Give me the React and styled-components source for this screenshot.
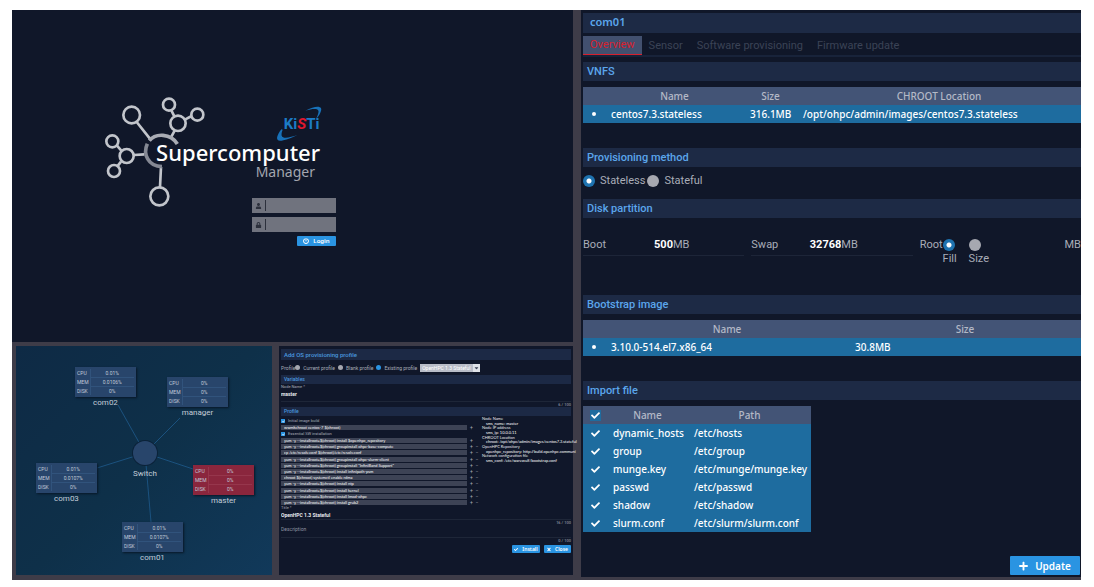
import React from "react";
import styled, { createGlobalStyle, css } from "styled-components";
import { FaCheck, FaPlus, FaTimes, FaUser, FaLock, FaPowerOff, FaCaretDown } from "react-icons/fa";

const UI = `Roboto, "Liberation Sans", sans-serif`;
const HUMAN = `"Noto Sans", "Open Sans", sans-serif`;
const SMALL = `Lato, "Liberation Sans", sans-serif`;

const Global = createGlobalStyle`
  *, *::before, *::after { box-sizing: border-box; }
  body { margin: 0; background: #fff; font-family: ${UI}; color: #a9adb8; }
  input, button, select { font: inherit; color: inherit; margin: 0; padding: 0; border: 0; border-radius: 0; min-width: 0; }
  table { border-collapse: collapse; }
  th, td { padding: 0; }
  h1, h2, h3, p { margin: 0; }
`;

const Board = styled.main`
  display: grid;
  grid-template-columns: minmax(0, 561fr) minmax(0, 500fr);
  gap: 8px;
  min-height: calc(100vh - 17px);
  margin: 10px 13px 7px 12px;
  background: #3e3c48;
`;

const Column = styled.div`
  display: flex;
  flex-direction: column;
`;

/* ---------- login ---------- */

const LoginPanel = styled.section`
  flex: 1;
  padding: 86px 0 0 92px;
  background: #101729;
`;

const Brand = styled.div`
  position: relative;
  width: 220px;
  height: 111px;
  svg { display: block; }
`;

const Wordmark = styled.h1`
  position: absolute;
  right: 4px;
  top: 44px;
  display: flex;
  flex-direction: column;
  align-items: flex-end;
  font: 500 22px/24px ${HUMAN};
  color: #fff;
`;

const Submark = styled.span`
  padding-right: 5px;
  font: 400 14px/16px ${HUMAN};
  color: #a3a6af;
`;

const LoginForm = styled.form`
  display: flex;
  flex-direction: column;
  align-items: flex-end;
  gap: 4px;
  width: 232px;
  margin-top: -9px;
`;

const Field = styled.label`
  display: flex;
  align-items: center;
  width: 84px;
  height: 15px;
  background: #70737e;
  color: #2c303c;
  svg { width: 13px; height: 6px; }
  input {
    flex: 1;
    height: 11px;
    padding-left: 3px;
    border-left: 1px solid #2c303c;
    background: transparent;
    font-size: 8px;
    outline: 0;
  }
`;

const BlueButton = styled.button`
  display: flex;
  align-items: center;
  justify-content: center;
  gap: ${(p) => (p.$large ? 7 : 4)}px;
  width: ${(p) => p.$width}px;
  height: ${(p) => p.$height}px;
  border-radius: 1px;
  background: #2a94e2;
  color: #fff;
  font: 600 ${(p) => (p.$large ? "10px" : p.$height > 9 ? "6px" : "5px")} / 1 ${HUMAN};
  svg { width: ${(p) => (p.$large ? 9 : p.$height > 9 ? 6 : 4)}px; }
`;

function Logo() {
  return (
    <svg width="220" height="111" viewBox="42 33 660 333" fill="none" aria-hidden="true">
      <g stroke="#c2c5cb" strokeWidth="8">
        <circle cx="125" cy="90" r="25" />
        <circle cx="237" cy="59" r="18" />
        <circle cx="322" cy="89" r="18" />
        <circle cx="264" cy="115" r="23" />
        <circle cx="67" cy="169" r="18" />
        <circle cx="110" cy="213" r="21" />
        <circle cx="72" cy="258" r="18" />
        <circle cx="208" cy="334" r="27" />
        <path d="M140 111 182 164M244 76l9 18M305 93l-19 10M254 137l-11 20M81 182l13 15M82 244l11-14M132 210l31-2M213 246l-3 60" />
      </g>
      <g strokeWidth="11">
        <path d="M178 167C196 144 242 144 262 177" stroke="#a9acb4" />
        <path d="M172 176C158 207 174 244 216 245" stroke="#858994" />
      </g>
      <path d="M646 77C681 59 702 63 691 83c-3 7-7 13-13 19 7-15 13-28 0-30-8-1-19 1-32 5zM574 133c-17 22-19 40 6 33 13-3 27-8 43-17-21 8-44 14-48 3-1-5 0-11 3-18z" fill="#1871b8" />
      <text x="581" y="133" fontFamily="Roboto, sans-serif" fontWeight="700" fontSize="45" fill="#1c7cc6">
        Ki<tspan fill="#e0182e" fontStyle="italic">S</tspan>Ti
      </text>
    </svg>
  );
}

/* ---------- topology ---------- */

const BottomRow = styled.div`
  display: grid;
  grid-template-columns: 256px minmax(0, 1fr);
  gap: 7px;
  padding: 4px 0 5px 4px;
`;

const Topology = styled.section`
  position: relative;
  height: 229px;
  background: linear-gradient(135deg, #0e2a45, #0e3049 50%, #11395a);
`;

const Links = styled.svg`
  position: absolute;
  inset: 0;
`;

const Node = styled.figure`
  position: absolute;
  left: ${(p) => p.$x}px;
  top: ${(p) => p.$y}px;
  width: 61px;
  margin: 0;
  figcaption { text-align: center; font-size: 8px; line-height: 11px; color: #c3ccd8; }
`;

const Stats = styled.table`
  width: 100%;
  height: 28px;
  background: ${(p) => (p.$alert ? "#8a263d" : "#28456b")};
  box-shadow: 1px 1px 2px #081727;
  font-size: 5px;
  line-height: 8px;
  color: #c0cad8;
  border: 2px solid ${(p) => (p.$alert ? "#8a263d" : "#28456b")};
  th { width: 14px; font-weight: 400; text-align: left; }
  td { text-align: center; border: 1px solid ${(p) => (p.$alert ? "#96364c" : "#31537c")}; }
`;

const SwitchLabel = styled.span`
  position: absolute;
  left: 109px;
  top: 122px;
  width: 40px;
  text-align: center;
  font-size: 8px;
  line-height: 11px;
  color: #c3ccd8;
`;

const nodes = [
  { name: "com02", x: 59, y: 21, cpu: "0.01%", mem: "0.0106%" },
  { name: "manager", x: 151, y: 31, cpu: "0%", mem: "0%" },
  { name: "com03", x: 20, y: 117, cpu: "0.01%", mem: "0.0107%" },
  { name: "master", x: 177, y: 119, cpu: "0%", mem: "0%", alert: true },
  { name: "com01", x: 106, y: 176, cpu: "0.01%", mem: "0.0107%" },
];

/* ---------- profile dialog ---------- */

const Dialog = styled.section`
  display: flex;
  flex-direction: column;
  padding: 3px 2px 0;
  background: #10172a;
  font-size: 5px;
  line-height: 6px;
`;

const MiniBar = styled.h3`
  padding-left: 3px;
  background: #1c2945;
  color: #4a97df;
  font-weight: 500;
  font-size: ${(p) => (p.$title ? 6 : 5)}px;
  line-height: ${(p) => (p.$title ? 11 : 9)}px;
`;

const MiniChoices = styled.div`
  display: flex;
  align-items: center;
  height: 15px;
  gap: 3px;
  label { display: flex; align-items: center; gap: 3px; }
  > span:first-child { margin-right: -3px; }
`;

const MiniSelect = styled.span`
  display: flex;
  width: 60px;
  height: 8px;
  background: #b9bdc8;
  select { appearance: none; flex: 1; padding-left: 2px; background: transparent; color: #fff; font-size: 5px; }
  svg { width: 7px; height: 8px; background: #dfe2e8; color: #3b4254; padding: 1px; }
`;

const Toggle = styled.input`
  appearance: none;
  flex: none;
  width: ${(p) => p.$size}px;
  height: ${(p) => p.$size}px;
  border-radius: 50%;
  background: #a6a8b0;
  &:checked {
    background: ${(p) => (p.$size > 8 ? "radial-gradient(circle, #fff 0 2px, #1e73b0 3px)" : "#2a94e2")};
  }
`;

const MiniCheck = styled.label`
  display: flex;
  align-items: center;
  gap: 3px;
  height: 8px;
  font-size: 4px;
  span { display: grid; place-items: center; width: 4px; height: 4px; background: #2a94e2; color: #fff; }
  svg { width: 3px; height: 3px; }
  input { position: absolute; appearance: none; width: 4px; height: 4px; }
`;

const MiniField = styled.label`
  display: flex;
  flex-direction: column;
  height: ${(p) => p.$height}px;
  border-bottom: 1px solid #1e2638;
  font-size: 4px;
  input { height: 7px; background: transparent; color: #e8eaee; font-weight: 700; font-size: 5px; }
  input::placeholder { color: #8d93a1; font-weight: 400; }
`;

const Count = styled.p`
  text-align: right;
  font-size: 4px;
  line-height: 5px;
`;

const ProfileBody = styled.div`
  display: grid;
  grid-template-columns: minmax(0, 201px) minmax(0, 1fr);
  height: 89px;
  padding-top: 1px;
`;

const Script = styled.div`
  display: flex;
  flex-direction: column;
`;

const Commands = styled.div`
  display: flex;
  flex: 1;
  flex-direction: column;
  justify-content: space-between;
`;

const CommandRow = styled.div`
  display: flex;
  gap: 3px;
  height: 5px;
  font-size: 5px;
  line-height: 5px;
  input {
    width: 186px;
    height: 5px;
    padding-left: 3px;
    background: #3d4355;
    color: #fff;
    font: 400 4px/5px ${SMALL};
  }
`;

const Variables = styled.dl`
  display: flex;
  flex-direction: column;
  justify-content: space-between;
  height: 46px;
  margin: 0;
  font: 400 4px/4px ${SMALL};
  color: #e8eaee;
  white-space: nowrap;
  dd { margin: 0 0 0 4px; color: #fff; }
`;

const MiniActions = styled.div`
  display: flex;
  justify-content: flex-end;
  gap: 4px;
  margin-top: 2px;
`;

const root = "yum -y --installroot=$(chroot) ";
const commands = [
  root + "install $openhpc_repository",
  root + "groupinstall ohpc-base-compute",
  "cp /etc/resolv.conf $(chroot)/etc/resolv.conf",
  root + "groupinstall ohpc-slurm-client",
  root + 'groupinstall "InfiniBand Support"',
  root + "install infinipath-psm",
  "chroot $(chroot) systemctl enable rdma",
  root + "install ntp",
  root + "install kernel",
  root + "install lmod-ohpc",
  root + "install grub2",
];
const variables = [
  ["Node Name", "sms_name: master"],
  ["Node IP address", "sms_ip: 10.0.0.11"],
  ["CHROOT Location", "chroot: /opt/ohpc/admin/images/centos7.3.stateful"],
  ["OpenHPC Repository", "openhpc_repository: http://build.openhpc.communi"],
  ["Network configuration file", "sms_conf: /etc/warewulf/bootstrap.conf"],
];

function Command({ value, removable }) {
  return (
    <CommandRow>
      <input aria-label="Command" defaultValue={value} />
      <span>+</span>
      {removable && <span>−</span>}
    </CommandRow>
  );
}

function ProfileDialog() {
  return (
    <Dialog>
      <MiniBar $title>Add OS provisioning profile</MiniBar>
      <MiniChoices>
        <span>Profile</span>
        <label><Toggle $size={5} type="radio" name="source" />Current profile</label>
        <label><Toggle $size={5} type="radio" name="source" />Blank profile</label>
        <label><Toggle $size={5} type="radio" name="source" defaultChecked />Existing profile</label>
        <MiniSelect>
          <select aria-label="Existing profile"><option>OpenHPC 1.3 Stateful</option></select>
          <FaCaretDown />
        </MiniSelect>
      </MiniChoices>
      <MiniBar>Variables</MiniBar>
      <MiniField $height={18}>Node Name *<input defaultValue="master" /></MiniField>
      <Count>6 / 100</Count>
      <MiniBar>Profile</MiniBar>
      <ProfileBody>
        <Script>
          <MiniCheck><input type="checkbox" defaultChecked /><span><FaCheck /></span>Initial image build</MiniCheck>
          <Command value="wwmkchroot centos-7 $(chroot)" />
          <MiniCheck><input type="checkbox" defaultChecked /><span><FaCheck /></span>Essential SW installation</MiniCheck>
          <Commands>
            {commands.map((c, i) => <Command key={c} value={c} removable={i > 0} />)}
          </Commands>
        </Script>
        <Variables>
          {variables.map(([k, v]) => (
            <React.Fragment key={k}><dt>{k}</dt><dd>{v}</dd></React.Fragment>
          ))}
        </Variables>
      </ProfileBody>
      <MiniField $height={15}>Title *<input defaultValue="OpenHPC 1.3 Stateful" /></MiniField>
      <Count>16 / 100</Count>
      <MiniField $height={13}>
        <input aria-label="Description" placeholder="Description" />
      </MiniField>
      <Count>0 / 100</Count>
      <MiniActions>
        <BlueButton type="button" $width={28} $height={8}><FaCheck />Install</BlueButton>
        <BlueButton type="button" $width={27} $height={8}><FaTimes />Close</BlueButton>
      </MiniActions>
    </Dialog>
  );
}

/* ---------- node detail ---------- */

const Detail = styled.section`
  display: flex;
  flex-direction: column;
  margin-bottom: 3px;
  padding: 3px 0 2px 2px;
  background: #101729;
  font-size: 11px;
  line-height: 18px;
`;

const DetailTitle = styled.h2`
  padding: 0 0 2px 7px;
  background: #1d2a45;
  color: #5ba6ec;
  font: 600 11px/18px ${HUMAN};
`;

const Tabs = styled.nav`
  display: flex;
  margin: 3px 0 5px;
  border-bottom: 2px solid #18233a;
`;

const Tab = styled.button`
  padding: 0 7px;
  height: 19px;
  background: transparent;
  color: #3b4356;
  font-size: 11px;
  ${(p) => p.$active && css`
    background: #42506f;
    color: #d8202e;
    border-bottom: 1px solid #d8202e;
  `}
`;

const Bar = styled.h3`
  margin-bottom: 6px;
  padding-left: 4px;
  background: #1d2a45;
  color: #5ba6ec;
  font-size: 11px;
  font-weight: 500;
  line-height: 19px;
`;

const Grid = styled.table`
  width: ${(p) => p.$width || "100%"};
  margin-bottom: ${(p) => p.$below || 0}px;
  table-layout: fixed;
  font: 500 10px/18px ${HUMAN};
  white-space: nowrap;
  th { background: #435476; color: #b4b9c6; font-weight: 500; }
  td { height: 18px; padding-left: 6px; background: #1e6c9f; color: #fff; }
  td:first-child { padding: 0; text-align: center; }
`;

const Mark = styled.input`
  appearance: none;
  display: block;
  width: 4px;
  height: 4px;
  margin: 0 auto;
  border-radius: 50%;
  background: #fff;
`;

const Tick = styled.label`
  display: grid;
  place-items: center;
  width: 11px;
  height: 11px;
  margin: 0 auto;
  background: #1e6c9f;
  color: #fff;
  svg { width: 9px; height: 9px; }
  input { position: absolute; appearance: none; width: 9px; height: 9px; }
`;

const Choices = styled.div`
  display: flex;
  align-items: center;
  gap: 2px;
  height: 16px;
  margin-bottom: 10px;
  label { display: flex; align-items: center; gap: 5px; }
`;

const Partitions = styled.div`
  display: grid;
  grid-template-columns: repeat(3, minmax(0, 1fr));
  gap: 7px;
  height: 71px;
  padding-top: 11px;
`;

const Partition = styled.label`
  display: flex;
  align-items: center;
  height: 21px;
  border-bottom: 1px solid #1d2538;
  span { width: 30px; }
  input { width: 60px; background: transparent; color: #fff; font-weight: 700; text-align: right; }
`;

const RootPartition = styled.div`
  display: flex;
  height: 40px;
  white-space: nowrap;
  padding-top: 1px;
  label { display: flex; flex-direction: column; width: 26px; line-height: 15px; }
  input { margin: 3px 0 0; }
  > span:last-child { margin-left: auto; }
`;

const Footer = styled.footer`
  display: flex;
  justify-content: flex-end;
  margin-top: auto;
  padding-right: 1px;
`;

const files = [
  ["dynamic_hosts", "/etc/hosts"],
  ["group", "/etc/group"],
  ["munge.key", "/etc/munge/munge.key"],
  ["passwd", "/etc/passwd"],
  ["shadow", "/etc/shadow"],
  ["slurm.conf", "/etc/slurm/slurm.conf"],
];

function CheckMark({ label }) {
  return <Tick><input type="checkbox" aria-label={label} defaultChecked /><FaCheck /></Tick>;
}

function NodeDetail() {
  return (
    <Detail>
      <DetailTitle>com01</DetailTitle>
      <Tabs>
        <Tab $active>Overview</Tab>
        <Tab>Sensor</Tab>
        <Tab>Software provisioning</Tab>
        <Tab>Firmware update</Tab>
      </Tabs>
      <Bar>VNFS</Bar>
      <Grid $below={25}>
        <colgroup><col width="22" /><col width="139" /><col width="53" /><col /></colgroup>
        <thead><tr><th /><th>Name</th><th>Size</th><th>CHROOT Location</th></tr></thead>
        <tbody><tr>
          <td><Mark type="radio" name="vnfs" aria-label="centos7.3.stateless" defaultChecked /></td>
          <td>centos7.3.stateless</td><td>316.1MB</td><td>/opt/ohpc/admin/images/centos7.3.stateless</td>
        </tr></tbody>
      </Grid>
      <Bar>Provisioning method</Bar>
      <Choices>
        <label><Toggle $size={12} type="radio" name="method" defaultChecked />Stateless</label>
        <label><Toggle $size={12} type="radio" name="method" />Stateful</label>
      </Choices>
      <Bar>Disk partition</Bar>
      <Partitions>
        <Partition><span>Boot</span><input defaultValue="500" />MB</Partition>
        <Partition><span>Swap</span><input defaultValue="32768" />MB</Partition>
        <RootPartition>
          <span>Root</span>
          <label><Toggle $size={12} type="radio" name="root" defaultChecked />Fill</label>
          <label><Toggle $size={12} type="radio" name="root" />Size</label>
          <span>MB</span>
        </RootPartition>
      </Partitions>
      <Bar>Bootstrap image</Bar>
      <Grid $below={25}>
        <colgroup><col width="22" /><col width="49%" /><col /></colgroup>
        <thead><tr><th /><th>Name</th><th>Size</th></tr></thead>
        <tbody><tr>
          <td><Mark type="radio" name="bootstrap" aria-label="3.10.0-514.el7.x86_64" defaultChecked /></td>
          <td>3.10.0-514.el7.x86_64</td><td>30.8MB</td>
        </tr></tbody>
      </Grid>
      <Bar>Import file</Bar>
      <Grid $width="228px">
        <colgroup><col width="24" /><col width="81" /><col /></colgroup>
        <thead><tr><th><CheckMark label="All files" /></th><th>Name</th><th>Path</th></tr></thead>
        <tbody>
          {files.map(([name, path]) => (
            <tr key={name}><td><CheckMark label={name} /></td><td>{name}</td><td>{path}</td></tr>
          ))}
        </tbody>
      </Grid>
      <Footer>
        <BlueButton type="button" $large $width={70} $height={19}><FaPlus />Update</BlueButton>
      </Footer>
    </Detail>
  );
}

export default function App() {
  return (
    <>
      <Global />
      <Board>
        <Column>
          <LoginPanel>
            <Brand>
              <Logo />
              <Wordmark>Supercomputer<Submark>Manager</Submark></Wordmark>
            </Brand>
            <LoginForm>
              <Field><FaUser /><input aria-label="User" /></Field>
              <Field><FaLock /><input type="password" aria-label="Password" /></Field>
              <BlueButton type="button" $width={39} $height={10}><FaPowerOff />Login</BlueButton>
            </LoginForm>
          </LoginPanel>
          <BottomRow>
            <Topology>
              <Links width="256" height="229" aria-hidden="true">
                <path d="M129 107 102 59M129 107 164 72M129 107 81 122M129 107 177 123M129 107 135 176" stroke="#1b527f" />
                <circle cx="129" cy="107" r="13" fill="#0b2239" />
                <circle cx="129" cy="107" r="12" fill="#28456b" />
              </Links>
              <SwitchLabel>Switch</SwitchLabel>
              {nodes.map((n) => (
                <Node key={n.name} $x={n.x} $y={n.y}>
                  <Stats $alert={n.alert}>
                    <tbody>
                      <tr><th>CPU</th><td>{n.cpu}</td></tr>
                      <tr><th>MEM</th><td>{n.mem}</td></tr>
                      <tr><th>DISK</th><td>0%</td></tr>
                    </tbody>
                  </Stats>
                  <figcaption>{n.name}</figcaption>
                </Node>
              ))}
            </Topology>
            <ProfileDialog />
          </BottomRow>
        </Column>
        <NodeDetail />
      </Board>
    </>
  );
}
